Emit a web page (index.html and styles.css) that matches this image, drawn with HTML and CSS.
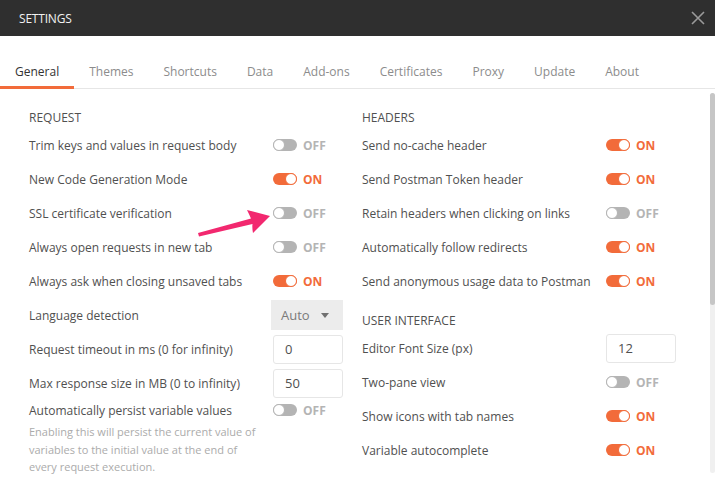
FILE: index.html
```html
<!DOCTYPE html>
<html>
<head>
<meta charset="utf-8">
<title>Settings</title>
<link rel="stylesheet" href="styles.css">
</head>
<body>
<div class="window">
  <header class="titlebar">
    <span class="title">SETTINGS</span>
    <svg class="close" width="14" height="14" viewBox="0 0 14 14"><path d="M1 1L13 13M13 1L1 13" stroke="#9a9a9a" stroke-width="1.6" fill="none"/></svg>
  </header>
  <nav class="tabs">
    <span class="tab active">General</span>
    <span class="tab">Themes</span>
    <span class="tab">Shortcuts</span>
    <span class="tab">Data</span>
    <span class="tab">Add-ons</span>
    <span class="tab">Certificates</span>
    <span class="tab">Proxy</span>
    <span class="tab">Update</span>
    <span class="tab">About</span>
  </nav>
  <div class="content">
    <div class="pane">
      <section class="col">
        <h3 class="section-title">REQUEST</h3>
        <div class="row"><span class="label">Trim keys and values in request body</span><span class="switch off"><span class="track"><span class="knob"></span></span><b>OFF</b></span></div>
        <div class="row"><span class="label">New Code Generation Mode</span><span class="switch on"><span class="track"><span class="knob"></span></span><b>ON</b></span></div>
        <div class="row"><span class="label">SSL certificate verification</span><span class="switch off"><span class="track"><span class="knob"></span></span><b>OFF</b></span></div>
        <div class="row"><span class="label">Always open requests in new tab</span><span class="switch off"><span class="track"><span class="knob"></span></span><b>OFF</b></span></div>
        <div class="row"><span class="label">Always ask when closing unsaved tabs</span><span class="switch on"><span class="track"><span class="knob"></span></span><b>ON</b></span></div>
        <div class="row"><span class="label">Language detection</span><span class="select">Auto<svg width="8" height="5" viewBox="0 0 8 5"><path d="M0 0H8L4 5Z" fill="#707070"/></svg></span></div>
        <div class="row"><span class="label">Request timeout in ms (0 for infinity)</span><span class="input">0</span></div>
        <div class="row"><span class="label">Max response size in MB (0 to infinity)</span><span class="input">50</span></div>
        <div class="row short"><span class="label">Automatically persist variable values</span><span class="switch off"><span class="track"><span class="knob"></span></span><b>OFF</b></span></div>
        <p class="desc">Enabling this will persist the current value of variables to the initial value at the end of every request execution.</p>
      </section>
      <section class="col">
        <h3 class="section-title">HEADERS</h3>
        <div class="row"><span class="label">Send no-cache header</span><span class="switch on"><span class="track"><span class="knob"></span></span><b>ON</b></span></div>
        <div class="row"><span class="label">Send Postman Token header</span><span class="switch on"><span class="track"><span class="knob"></span></span><b>ON</b></span></div>
        <div class="row"><span class="label">Retain headers when clicking on links</span><span class="switch off"><span class="track"><span class="knob"></span></span><b>OFF</b></span></div>
        <div class="row"><span class="label">Automatically follow redirects</span><span class="switch on"><span class="track"><span class="knob"></span></span><b>ON</b></span></div>
        <div class="row"><span class="label">Send anonymous usage data to Postman</span><span class="switch on"><span class="track"><span class="knob"></span></span><b>ON</b></span></div>
        <h3 class="section-title second">USER INTERFACE</h3>
        <div class="row"><span class="label">Editor Font Size (px)</span><span class="input">12</span></div>
        <div class="row"><span class="label">Two-pane view</span><span class="switch off"><span class="track"><span class="knob"></span></span><b>OFF</b></span></div>
        <div class="row"><span class="label">Show icons with tab names</span><span class="switch on"><span class="track"><span class="knob"></span></span><b>ON</b></span></div>
        <div class="row"><span class="label">Variable autocomplete</span><span class="switch on"><span class="track"><span class="knob"></span></span><b>ON</b></span></div>
      </section>
    </div>
    <div class="scrollbar"><div class="thumb"></div></div>
  </div>
  <svg class="arrow" width="80" height="36" viewBox="0 0 80 36"><path d="M3 28L56 13.5Q54 9 52 5L75 11L58 28Q57 23 57.5 19L4 31.5Z" fill="#f2286f"/></svg>
</div>
</body>
</html>
```

FILE: styles.css
```css
html, body {
  margin: 0;
  padding: 0;
  background: #fff;
}
body {
  font-family: "Open Sans", "Noto Sans", sans-serif;
  color: #505050;
  overflow: hidden;
}
.window {
  position: relative;
  width: 715px;
  height: 477px;
  overflow: hidden;
}
.titlebar {
  height: 36px;
  background: #2f2f2f;
  display: flex;
  align-items: center;
  justify-content: space-between;
  padding: 0 10px 0 19px;
}
.title {
  color: #f2f2f2;
  font-size: 12px;
  letter-spacing: -0.2px;
}
.close {
  display: block;
}
.tabs {
  display: flex;
  margin-top: 18px;
  height: 34px;
  border-bottom: 1px solid #e6e6e6;
}
.tab {
  box-sizing: border-box;
  height: 35px;
  margin-bottom: -1px;
  padding: 2px 15px 0;
  display: flex;
  align-items: center;
  border-bottom: 3px solid transparent;
  font-size: 12px;
  color: #8c8c8c;
}
.tab.active {
  color: #333;
  border-bottom-color: #f26b3a;
}
.content {
  display: flex;
  height: 388px;
}
.pane {
  flex: 1;
  display: grid;
  grid-template-columns: 313px 313px;
  column-gap: 20px;
  padding: 19px 0 0 29px;
  align-content: start;
}
.section-title {
  margin: 0;
  height: 20px;
  line-height: 20px;
  font-size: 12px;
  font-weight: 400;
  color: #505050;
}
.section-title.second {
  margin-top: 13px;
}
.row {
  display: grid;
  grid-template-columns: 244px 72px;
  align-items: center;
  height: 34px;
  font-size: 12px;
}
.row.short {
  height: 20px;
}
.label {
  white-space: nowrap;
  color: #505050;
}
.switch {
  display: flex;
  align-items: center;
  gap: 6px;
}
.track {
  width: 24px;
  height: 12px;
  border-radius: 6px;
  background: #b4b4b4;
  display: flex;
  justify-content: flex-start;
}
.knob {
  box-sizing: border-box;
  width: 12px;
  height: 12px;
  border-radius: 50%;
  background: #fff;
  border: 1.5px solid #b4b4b4;
}
.switch b {
  font-size: 12px;
  font-weight: 700;
  color: #b4b4b4;
}
.switch.on .track {
  background: #f26b3a;
  justify-content: flex-end;
}
.switch.on .knob {
  border-color: #f26b3a;
}
.switch.on b {
  color: #f26b3a;
}
.select {
  box-sizing: border-box;
  margin-left: -2px;
  width: 72px;
  height: 30px;
  background: #ececec;
  display: flex;
  align-items: center;
  justify-content: space-between;
  padding: 0 14px 0 10px;
  color: #7a7a7a;
  font-size: 13px;
}
.input {
  box-sizing: border-box;
  width: 70px;
  height: 29px;
  border: 1px solid #e6e6e6;
  border-radius: 3px;
  display: flex;
  align-items: center;
  padding-left: 11px;
  font-size: 13px;
  color: #505050;
}
.desc {
  margin: 3px 0 0;
  width: 232px;
  font-size: 11px;
  line-height: 17.5px;
  color: #ababab;
}
.scrollbar {
  width: 5px;
  margin: 4px 0 4px 0;
  background: #f0f0f0;
  border-radius: 3px;
  display: flex;
  flex-direction: column;
}
.thumb {
  height: 212px;
  background: #c6c6c6;
  border-radius: 3px;
}
.arrow {
  position: absolute;
  left: 195px;
  top: 205px;
}
```
